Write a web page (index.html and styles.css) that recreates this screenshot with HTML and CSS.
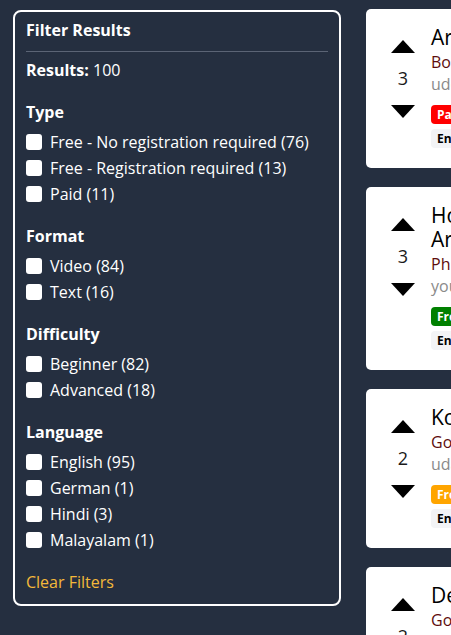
FILE: index.html
```html
<!DOCTYPE html>
<html lang="en">
<head>
<meta charset="UTF-8">
<meta name="viewport" content="width=device-width, initial-scale=1.0">
<title>Learning Resources</title>
<link rel="stylesheet" href="styles.css">
</head>
<body>
<div class="page">
  <aside class="filters">
    <h3 class="filters-title">Filter Results</h3>
    <p class="results"><b>Results:</b> 100</p>

    <div class="group">
      <h4>Type</h4>
      <label class="option"><input type="checkbox"> Free - No registration required (76)</label>
      <label class="option"><input type="checkbox"> Free - Registration required (13)</label>
      <label class="option"><input type="checkbox"> Paid (11)</label>
    </div>

    <div class="group">
      <h4>Format</h4>
      <label class="option"><input type="checkbox"> Video (84)</label>
      <label class="option"><input type="checkbox"> Text (16)</label>
    </div>

    <div class="group">
      <h4>Difficulty</h4>
      <label class="option"><input type="checkbox"> Beginner (82)</label>
      <label class="option"><input type="checkbox"> Advanced (18)</label>
    </div>

    <div class="group">
      <h4>Language</h4>
      <label class="option"><input type="checkbox"> English (95)</label>
      <label class="option"><input type="checkbox"> German (1)</label>
      <label class="option"><input type="checkbox"> Hindi (3)</label>
      <label class="option"><input type="checkbox"> Malayalam (1)</label>
    </div>

    <a class="clear" href="#">Clear Filters</a>
  </aside>

  <main class="list">
    <div class="card">
      <div class="vote">
        <span class="up"></span>
        <span class="count">3</span>
        <span class="down"></span>
      </div>
      <div class="info">
        <h2 class="title">Arduino Step by Step</h2>
        <div class="author">Born To Engineer</div>
        <div class="source">udemy.com</div>
        <div class="tags">
          <span class="tag paid">Paid</span>
          <span class="tag lang">English</span>
        </div>
      </div>
    </div>

    <div class="card">
      <div class="vote">
        <span class="up"></span>
        <span class="count">3</span>
        <span class="down"></span>
      </div>
      <div class="info">
        <h2 class="title">Home Automation with Arduino</h2>
        <div class="author">Phil's Lab</div>
        <div class="source">youtube.com</div>
        <div class="tags">
          <span class="tag free">Free</span>
          <span class="tag lang">English</span>
        </div>
      </div>
    </div>

    <div class="card">
      <div class="vote">
        <span class="up"></span>
        <span class="count">2</span>
        <span class="down"></span>
      </div>
      <div class="info">
        <h2 class="title">Kotlin for Android</h2>
        <div class="author">Google</div>
        <div class="source">udacity.com</div>
        <div class="tags">
          <span class="tag reg">Free - Registration</span>
          <span class="tag lang">English</span>
        </div>
      </div>
    </div>

    <div class="card">
      <div class="vote">
        <span class="up"></span>
        <span class="count">2</span>
        <span class="down"></span>
      </div>
      <div class="info">
        <h2 class="title">Deep Learning</h2>
        <div class="author">Google</div>
        <div class="source">udacity.com</div>
        <div class="tags">
          <span class="tag reg">Free - Registration</span>
          <span class="tag lang">English</span>
        </div>
      </div>
    </div>
  </main>
</div>
</body>
</html>
```

FILE: styles.css
```css
html {
    overflow: hidden;
}
body {
    margin: 0;
    background: #252f40;
    font-family: "Open Sans", Arial, sans-serif;
    color: #fff;
}
.page {
    display: flex;
    align-items: flex-start;
    gap: 25px;
    padding: 9px 0 0 13px;
}

/* Filter panel */
.filters {
    flex: 0 0 328px;
    box-sizing: border-box;
    margin-top: 1px;
    padding: 6px 11px 10px;
    border: 2px solid #fff;
    border-radius: 8px;
}
.filters-title {
    margin: 0;
    font-size: 16px;
    line-height: 24px;
    padding-bottom: 9px;
    border-bottom: 1px solid #5b6475;
}
.results {
    margin: 6px 0 0;
    font-size: 16px;
    line-height: 24px;
}
.group {
    margin-top: 18px;
}
.group + .group {
    margin-top: 17px;
}
.group h4 {
    margin: 0 0 5px;
    font-size: 16px;
    line-height: 24px;
}
.option {
    display: flex;
    align-items: center;
    gap: 8px;
    height: 26px;
    font-size: 16px;
}
.option input {
    appearance: none;
    margin: 0;
    width: 16px;
    height: 16px;
    background: #fff;
    border-radius: 3px;
}
.clear {
    display: block;
    margin-top: 17px;
    font-size: 16px;
    line-height: 24px;
    color: #f4b93a;
    text-decoration: none;
}

/* Resource cards */
.list {
    flex: 0 0 480px;
    display: flex;
    flex-direction: column;
    gap: 19px;
}
.card {
    display: flex;
    gap: 8px;
    padding: 16px 20px 20px 17px;
    background: #fff;
    border-radius: 5px;
    color: #000;
}
.vote {
    width: 40px;
    display: flex;
    flex-direction: column;
    align-items: center;
    padding-top: 15px;
}
.up, .down {
    width: 0;
    height: 0;
    border-left: 12px solid transparent;
    border-right: 12px solid transparent;
}
.up {
    border-bottom: 13px solid #000;
}
.down {
    border-top: 13px solid #000;
}
.count {
    margin: 14px 0 16px;
    font-size: 18px;
    line-height: 22px;
    color: #1a1a1a;
}
.title {
    max-width: 260px;
    margin: 0;
    font-size: 21px;
    font-weight: normal;
    line-height: 24px;
}
.author {
    margin-top: 2px;
    font-size: 16px;
    line-height: 22px;
    color: #5e0c0c;
}
.source {
    font-size: 16px;
    line-height: 22px;
    color: #8a8a8a;
}
.tags {
    display: flex;
    flex-direction: column;
    align-items: flex-start;
    gap: 5px;
    margin-top: 10px;
}
.tag {
    padding: 2px 6px;
    border-radius: 4px;
    font-size: 12px;
    font-weight: bold;
    line-height: 15px;
}
.paid {
    background: #ff0000;
    color: #fff;
}
.free {
    background: #008000;
    color: #fff;
}
.reg {
    background: #ffa500;
    color: #fff;
}
.lang {
    background: #f3f4f6;
    color: #000;
}
```
